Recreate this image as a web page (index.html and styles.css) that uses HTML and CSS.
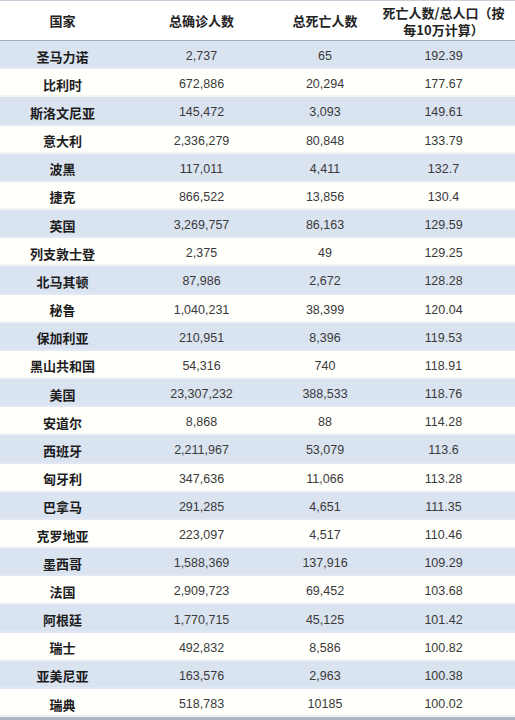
FILE: index.html
```html
<!DOCTYPE html>
<html lang="zh">
<head>
<meta charset="utf-8">
<link rel="stylesheet" href="styles.css">
</head>
<body>
<div class="table">
  <div class="row head">
    <div class="cell">国家</div>
    <div class="cell">总确诊人数</div>
    <div class="cell">总死亡人数</div>
    <div class="cell wide">死亡人数/总人口（按每10万计算）</div>
  </div>
  <div class="row odd"><div class="cell name">圣马力诺</div><div class="cell num">2,737</div><div class="cell num">65</div><div class="cell num">192.39</div></div>
  <div class="row even"><div class="cell name">比利时</div><div class="cell num">672,886</div><div class="cell num">20,294</div><div class="cell num">177.67</div></div>
  <div class="row odd"><div class="cell name">斯洛文尼亚</div><div class="cell num">145,472</div><div class="cell num">3,093</div><div class="cell num">149.61</div></div>
  <div class="row even"><div class="cell name">意大利</div><div class="cell num">2,336,279</div><div class="cell num">80,848</div><div class="cell num">133.79</div></div>
  <div class="row odd"><div class="cell name">波黑</div><div class="cell num">117,011</div><div class="cell num">4,411</div><div class="cell num">132.7</div></div>
  <div class="row even"><div class="cell name">捷克</div><div class="cell num">866,522</div><div class="cell num">13,856</div><div class="cell num">130.4</div></div>
  <div class="row odd"><div class="cell name">英国</div><div class="cell num">3,269,757</div><div class="cell num">86,163</div><div class="cell num">129.59</div></div>
  <div class="row even"><div class="cell name">列支敦士登</div><div class="cell num">2,375</div><div class="cell num">49</div><div class="cell num">129.25</div></div>
  <div class="row odd"><div class="cell name">北马其顿</div><div class="cell num">87,986</div><div class="cell num">2,672</div><div class="cell num">128.28</div></div>
  <div class="row even"><div class="cell name">秘鲁</div><div class="cell num">1,040,231</div><div class="cell num">38,399</div><div class="cell num">120.04</div></div>
  <div class="row odd"><div class="cell name">保加利亚</div><div class="cell num">210,951</div><div class="cell num">8,396</div><div class="cell num">119.53</div></div>
  <div class="row even"><div class="cell name">黑山共和国</div><div class="cell num">54,316</div><div class="cell num">740</div><div class="cell num">118.91</div></div>
  <div class="row odd"><div class="cell name">美国</div><div class="cell num">23,307,232</div><div class="cell num">388,533</div><div class="cell num">118.76</div></div>
  <div class="row even"><div class="cell name">安道尔</div><div class="cell num">8,868</div><div class="cell num">88</div><div class="cell num">114.28</div></div>
  <div class="row odd"><div class="cell name">西班牙</div><div class="cell num">2,211,967</div><div class="cell num">53,079</div><div class="cell num">113.6</div></div>
  <div class="row even"><div class="cell name">匈牙利</div><div class="cell num">347,636</div><div class="cell num">11,066</div><div class="cell num">113.28</div></div>
  <div class="row odd"><div class="cell name">巴拿马</div><div class="cell num">291,285</div><div class="cell num">4,651</div><div class="cell num">111.35</div></div>
  <div class="row even"><div class="cell name">克罗地亚</div><div class="cell num">223,097</div><div class="cell num">4,517</div><div class="cell num">110.46</div></div>
  <div class="row odd"><div class="cell name">墨西哥</div><div class="cell num">1,588,369</div><div class="cell num">137,916</div><div class="cell num">109.29</div></div>
  <div class="row even"><div class="cell name">法国</div><div class="cell num">2,909,723</div><div class="cell num">69,452</div><div class="cell num">103.68</div></div>
  <div class="row odd"><div class="cell name">阿根廷</div><div class="cell num">1,770,715</div><div class="cell num">45,125</div><div class="cell num">101.42</div></div>
  <div class="row even"><div class="cell name">瑞士</div><div class="cell num">492,832</div><div class="cell num">8,586</div><div class="cell num">100.82</div></div>
  <div class="row odd"><div class="cell name">亚美尼亚</div><div class="cell num">163,576</div><div class="cell num">2,963</div><div class="cell num">100.38</div></div>
  <div class="row even last"><div class="cell name">瑞典</div><div class="cell num">518,783</div><div class="cell num">10185</div><div class="cell num">100.02</div></div>
</div>
</body>
</html>
```

FILE: styles.css
```css
html, body {
  margin: 0;
  padding: 0;
  background: #ffffff;
}

.table {
  width: 515px;
  height: 720px;
  box-sizing: border-box;
  display: flex;
  flex-direction: column;
  border-top: 1px solid #c9d0db;
  border-bottom: 3px solid #acb6c5;
  font-family: "Noto Sans CJK SC", "Noto Sans", sans-serif;
}

.row {
  display: grid;
  grid-template-columns: 125px 153px 94px 143px;
  align-items: center;
  flex: 1 1 0;
  min-height: 0;
}

.head {
  flex: 0 0 39px;
  border-bottom: 1px solid #a2aec1;
  background: #ffffff;
}

.cell {
  text-align: center;
  padding: 0 4px;
}

.head .cell {
  font-size: 13px;
  font-weight: bold;
  color: #222222;
  line-height: 17px;
}

.head .wide {
  padding: 0 8px;
}

.odd {
  background: #dae3f0;
  box-shadow: inset 0 -2px 0 #e2e9f4;
}

.even {
  background: #fffffc;
  box-shadow: inset 0 -2px 0 #f3f4f5;
}

.last {
  box-shadow: inset 0 -2px 0 #eef0f3;
}

.name {
  font-size: 13px;
  font-weight: bold;
  color: #1c1c1c;
  padding-top: 2px;
}

.num {
  font-family: "Liberation Sans", Arial, sans-serif;
  font-size: 12.5px;
  color: #3a3a3a;
  padding-top: 2px;
}
```
